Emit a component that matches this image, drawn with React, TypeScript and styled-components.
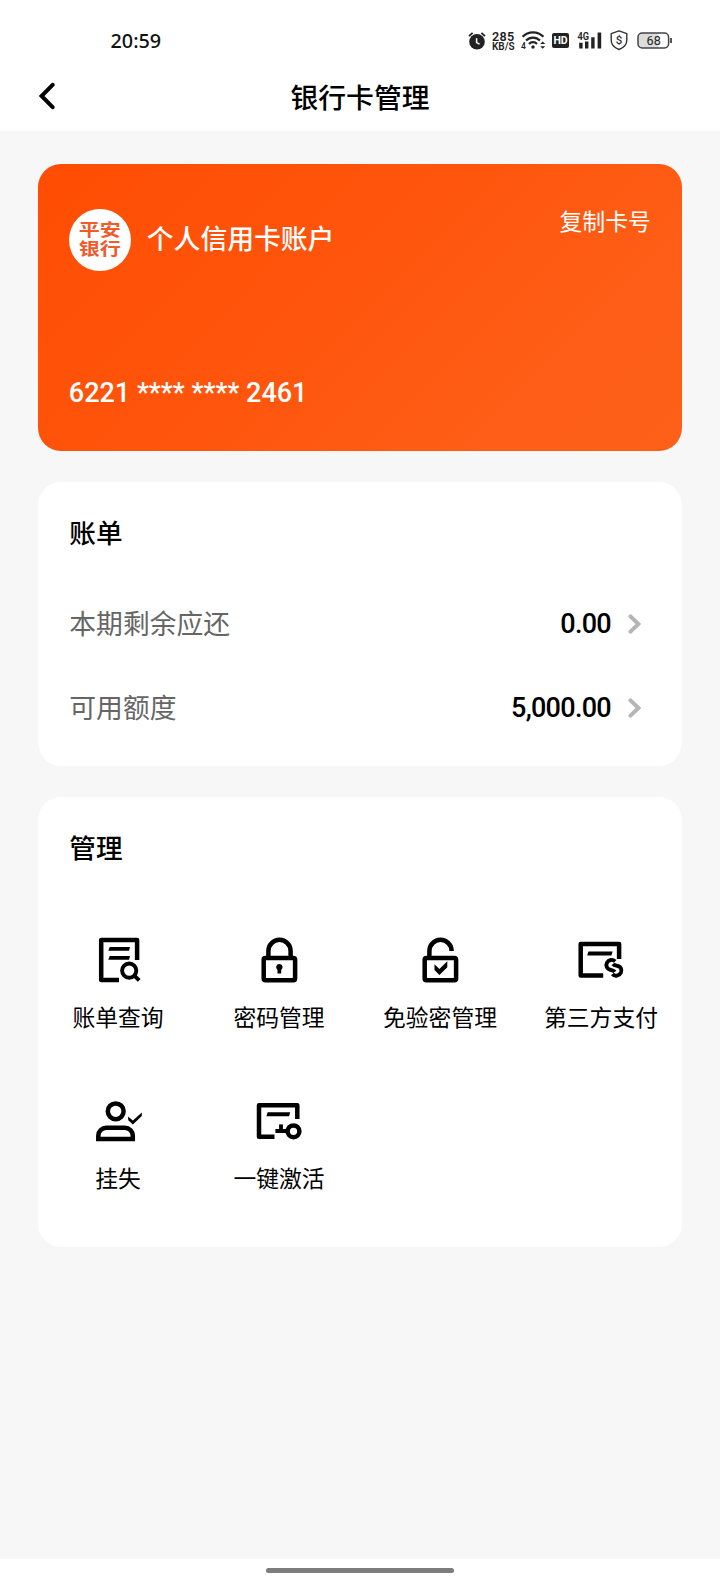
import React from 'react';
import styled, { createGlobalStyle } from 'styled-components';

const sans = `Roboto, "Noto Sans CJK SC", sans-serif`;

const GlobalStyle = createGlobalStyle`
  * { box-sizing: border-box; }
  body { margin: 0; background: #f7f7f7; font-family: ${sans}; color: #0a0a0a; }
`;

const Page = styled.div`
  width: 720px;
  height: 1584px;
  display: flex;
  flex-direction: column;
  background: #f7f7f7;
  overflow: hidden;
`;

const Header = styled.header`
  height: 131px;
  flex: none;
  background: #fff;
`;

const StatusBar = styled.div`
  height: 64px;
  padding: 17px 47px 0 110.5px;
  display: flex;
  justify-content: space-between;
`;

const Clock = styled.div`
  height: 47px;
  font: 500 19.8px/47px "Noto Sans", sans-serif;
  color: #111;
`;

const StatusIcons = styled.div`
  display: flex;
  align-items: center;
  height: 47px;
`;

const StatusIcon = styled.svg<{ $gap?: number }>`
  display: block;
  flex: none;
  margin-left: ${(p) => p.$gap ?? 0}px;
`;

const NetSpeed = styled.div`
  width: 24px;
  margin-left: 6px;
  display: flex;
  flex-direction: column;
  color: #222;
  font-family: Roboto, sans-serif;
  font-weight: 600;
  white-space: nowrap;
`;

const SpeedValue = styled.span`
  font-size: 12.6px;
  line-height: 11px;
  letter-spacing: 0.3px;
`;

const SpeedUnit = styled.span`
  font-size: 10px;
  line-height: 9px;
`;

const NavBar = styled.div`
  height: 67px;
  display: grid;
  grid-template-columns: 100px 1fr 100px;
  align-items: center;
`;

const BackButton = styled.button`
  border: 0;
  padding: 0 0 3px 36.5px;
  background: none;
  display: flex;
`;

const Title = styled.h1`
  margin: 0;
  padding-top: 3px;
  text-align: center;
  font-size: 27.8px;
  line-height: 40px;
  font-weight: 500;
  color: #000;
`;

const Content = styled.main`
  flex: 1;
  padding: 32.5px 38px 0 38.3px;
  display: flex;
  flex-direction: column;
  gap: 31px;
`;

const BankCard = styled.section`
  height: 287.5px;
  border-radius: 23px;
  padding: 45px 31px 0 30.5px;
  color: #fff;
  background: linear-gradient(135deg, #ff4d03 0%, #ff560e 50%, #fe5e17 78%, #fe6018 100%);
`;

const CardTop = styled.div`
  display: flex;
  height: 62px;
`;

const BankLogo = styled.div`
  width: 62px;
  height: 62px;
  border-radius: 50%;
  background: #fff;
  color: #f15a2b;
  display: flex;
  align-items: center;
  justify-content: center;
`;

const LogoLine = styled.span`
  display: block;
  font-size: 21px;
  font-weight: 700;
  line-height: 24px;
`;

const LogoText = styled.div`
  transform: scaleY(0.8);
`;

const AccountName = styled.div`
  margin-left: 16px;
  padding-top: 2px;
  font-size: 26.8px;
  font-weight: 500;
  line-height: 58px;
  flex: 1;
`;

const CopyLink = styled.div`
  padding-top: 1.5px;
  font-size: 22.9px;
  line-height: 26px;
`;

const CardNumber = styled.div`
  margin-top: 106px;
  font-size: 27px;
  font-weight: 500;
  line-height: 32px;
`;

const Panel = styled.section<{ $height: number }>`
  height: ${(p) => p.$height}px;
  border-radius: 23px;
  background: #fff;
`;

const PanelTitle = styled.h2`
  margin: 0;
  padding: 32px 31px 0;
  font-size: 26.6px;
  font-weight: 500;
  line-height: 40px;
  color: #000;
`;

const BillRows = styled.div`
  padding: 27.5px 40px 0 31px;
`;

const BillRow = styled.div`
  height: 84px;
  display: flex;
  align-items: center;
`;

const BillLabel = styled.span`
  flex: 1;
  padding-bottom: 3px;
  font-size: 26.8px;
  color: #666;
`;

const BillValue = styled.span`
  font-size: 27px;
  font-weight: 500;
  letter-spacing: -0.7px;
  color: #000;
  margin-right: 17px;
`;

const ActionGrid = styled.div`
  display: grid;
  grid-template-columns: repeat(4, 161px);
  grid-auto-rows: 161px;
  padding-top: 66.5px;
  margin-left: -0.8px;
`;

const Action = styled.div`
  display: flex;
  flex-direction: column;
  align-items: center;
`;

const ActionLabel = styled.span`
  margin-top: 17px;
  font-size: 22.8px;
  line-height: 36px;
  color: #000;
  white-space: nowrap;
`;

const HomeBar = styled.footer`
  height: 25.5px;
  flex: none;
  background: #fff;
  display: flex;
  justify-content: center;
  padding-top: 9.5px;
`;

const HomeHandle = styled.div`
  width: 188px;
  height: 5px;
  border-radius: 3px;
  background: #7d7d7d;
`;

const ActionIcon = ({ children }: { children: React.ReactNode }) => (
  <svg width="48" height="48" viewBox="0 0 48 48" fill="none" stroke="#000" strokeWidth="4.5" strokeLinejoin="round">
    {children}
  </svg>
);

const BillSearchIcon = () => (
  <ActionIcon>
    <path d="M25 43.9H7.2V3.9H43.1V24" />
    <path d="M15.7 11H36L35 14.8H14.3ZM15.7 20H36L35 23.8H14.3Z" fill="#000" stroke="none" />
    <circle cx="35.2" cy="34.6" r="7.1" strokeWidth="3.9" />
    <path d="M40.3 39.6L45.2 44.4" strokeWidth="4" />
  </ActionIcon>
);

const LockIcon = () => (
  <ActionIcon>
    <rect x="8.7" y="21.9" width="31.4" height="22.3" rx="1.8" />
    <path d="M13.4 21V14.9a11.1 11.1 0 0 1 22.2 0V21" />
    <path d="M24.3 27.9a3.3 3.3 0 0 1 1.9 6V37.5h-3.7V33.9a3.3 3.3 0 0 1 1.8-6Z" fill="#000" stroke="none" />
  </ActionIcon>
);

const UnlockIcon = () => (
  <ActionIcon>
    <rect x="8.7" y="21.9" width="31.4" height="22.3" rx="1.8" />
    <path d="M13.4 21V14.9a11.1 11.1 0 0 1 22.2 0" />
    <path d="M18.5 28.3L23.4 33L31.3 25.2V31.2L23.4 39L18.5 34.1Z" fill="#000" stroke="none" />
  </ActionIcon>
);

const ThirdPartyIcon = () => (
  <ActionIcon>
    <path d="M26.2 39.6H3.7V8.1H42.1V23" />
    <path d="M11.4 15.6H35.6L34.4 19.6H10.2Z" fill="#000" stroke="none" />
    <path d="M38.2 25.4C35.6 23 31.6 23.6 30 26.6C28.4 29.8 30 32.6 32.8 33.6C34.8 34.3 36.6 34.2 37.8 35.8" strokeWidth="3.9" />
    <path d="M35.4 38.2C38 40.8 42.4 39.8 43.9 36.6C45.2 33.6 43.8 31 41.2 30.1C39 29.4 37.4 29.6 36 28" strokeWidth="3.9" />
  </ActionIcon>
);

const ReportLossIcon = () => (
  <ActionIcon>
    <circle cx="21.7" cy="14.3" r="7.9" />
    <path d="M4.3 41.9V38.8a8 8 0 0 1 8-8H30.8a8 8 0 0 1 8 8V41.9Z" strokeLinejoin="miter" />
    <path d="M34 19.4L38.9 23.4L47.8 15.6V18.9L38.9 27.5L34.3 23.3Z" fill="#000" stroke="none" />
  </ActionIcon>
);

const ActivateIcon = () => (
  <ActionIcon>
    <path d="M19.5 39.7H4V8.2H42.3V22" />
    <path d="M12.6 15.2H35.2L34.1 19.3H11.4Z" fill="#000" stroke="none" />
    <circle cx="38.5" cy="34.3" r="5.9" />
    <path d="M20.4 34H32" strokeWidth="4" />
    <path d="M26 27.4V33" strokeWidth="3.8" />
  </ActionIcon>
);

const RowChevron = () => (
  <svg width="14" height="22" viewBox="0 0 14 22" fill="none" stroke="#b5b5b5" strokeWidth="4" strokeLinecap="round" strokeLinejoin="miter">
    <path d="M2.5 3.4L10.4 11L2.5 18.6" />
  </svg>
);

const actions: [string, React.FC][] = [
  ['账单查询', BillSearchIcon],
  ['密码管理', LockIcon],
  ['免验密管理', UnlockIcon],
  ['第三方支付', ThirdPartyIcon],
  ['挂失', ReportLossIcon],
  ['一键激活', ActivateIcon],
];

const bills: [string, string][] = [
  ['本期剩余应还', '0.00'],
  ['可用额度', '5,000.00'],
];

const StatusGlyphs = () => (
  <StatusIcons>
    <StatusIcon width="18" height="20" viewBox="0 0 18 20">
      <circle cx="9" cy="10.8" r="7.8" fill="#222" />
      <path d="M1 5.2L4.6 1.8M17 5.2L13.4 1.8" stroke="#222" strokeWidth="1.8" />
      <path d="M8.6 7.2V11.6L11.6 13.2" stroke="#fff" strokeWidth="1.5" fill="none" />
    </StatusIcon>
    <NetSpeed>
      <SpeedValue>285</SpeedValue>
      <SpeedUnit>KB/S</SpeedUnit>
    </NetSpeed>
    <StatusIcon $gap={5} width="25" height="20" viewBox="0 0 25 20">
      <g fill="none" stroke="#222" strokeWidth="2.2">
        <path d="M1.6 5.8C7.2 -0.2 16.8 -0.2 22.4 5.8" />
        <path d="M5 9.6C9 5.5 15 5.5 19 9.6" />
        <path d="M8 13C10.2 10.6 13.8 10.6 16 13" />
      </g>
      <circle cx="12" cy="16" r="1.7" fill="#222" />
      <text x="0" y="17.6" fontFamily="Roboto" fontWeight="600" fontSize="8.5" fill="#222">4</text>
      <path d="M19.2 13L21.7 10.4L24.2 13ZM19.2 15.2H24.2L21.7 17.8Z" fill="#222" />
    </StatusIcon>
    <StatusIcon $gap={6} width="17" height="15" viewBox="0 0 17 15">
      <rect width="17" height="15" rx="2" fill="#222" />
      <text x="8.5" y="11.4" textAnchor="middle" fontFamily="Roboto" fontWeight="700" fontSize="10.5" fill="#fff">HD</text>
    </StatusIcon>
    <StatusIcon $gap={8} width="26" height="20" viewBox="0 0 26 20">
      <text x="0.4" y="8.6" fontFamily="Roboto" fontWeight="600" fontSize="10.2" textLength="11.6" lengthAdjust="spacingAndGlyphs" fill="#222">4G</text>
      <path d="M2.2 11.8h3.4v5.6H2.2ZM8 10.4h3.4v7H8ZM14.2 6.2h3.4v11.2H14.2ZM20.6 1.6h3.6v15.8h-3.6Z" fill="#222" />
    </StatusIcon>
    <StatusIcon $gap={7} width="18" height="21" viewBox="0 0 18 21">
      <path d="M9 0.9L16.8 3.6V10.3C16.8 14.7 13.6 17.9 9 19.5C4.4 17.9 1.2 14.7 1.2 10.3V3.6Z" fill="none" stroke="#333" strokeWidth="1.4" strokeLinejoin="round" />
      <text x="9" y="14" textAnchor="middle" fontFamily="Roboto" fontWeight="500" fontSize="11.5" fill="#333">$</text>
    </StatusIcon>
    <StatusIcon $gap={9} width="36" height="17" viewBox="0 0 36 17">
      <path d="M5 1H21.5V16H5A4 4 0 0 1 1 12V5A4 4 0 0 1 5 1Z" fill="#dcdcdc" />
      <rect x="1" y="1" width="30.6" height="15" rx="4.2" fill="none" stroke="#444" strokeWidth="1.5" />
      <path d="M34 6V11" stroke="#444" strokeWidth="1.8" />
      <text x="16.7" y="13" textAnchor="middle" fontFamily="Roboto" fontSize="12.6" fill="#222">68</text>
    </StatusIcon>
  </StatusIcons>
);

export default function App() {
  return (
    <Page>
      <GlobalStyle />
      <Header>
        <StatusBar>
          <Clock>20:59</Clock>
          <StatusGlyphs />
        </StatusBar>
        <NavBar>
          <BackButton aria-label="返回">
            <svg width="20" height="28" viewBox="0 0 20 28" fill="none" stroke="#000" strokeWidth="4" strokeLinecap="round">
              <path d="M15.6 2.8L4.6 14L15.6 25.2" />
            </svg>
          </BackButton>
          <Title>银行卡管理</Title>
        </NavBar>
      </Header>
      <Content>
        <BankCard>
          <CardTop>
            <BankLogo>
              <LogoText>
                <LogoLine>平安</LogoLine>
                <LogoLine>银行</LogoLine>
              </LogoText>
            </BankLogo>
            <AccountName>个人信用卡账户</AccountName>
            <CopyLink>复制卡号</CopyLink>
          </CardTop>
          <CardNumber>6221 **** **** 2461</CardNumber>
        </BankCard>
        <Panel $height={284}>
          <PanelTitle>账单</PanelTitle>
          <BillRows>
            {bills.map(([label, value]) => (
              <BillRow key={label}>
                <BillLabel>{label}</BillLabel>
                <BillValue>{value}</BillValue>
                <RowChevron />
              </BillRow>
            ))}
          </BillRows>
        </Panel>
        <Panel $height={450}>
          <PanelTitle>管理</PanelTitle>
          <ActionGrid>
            {actions.map(([label, Icon]) => (
              <Action key={label}>
                <Icon />
                <ActionLabel>{label}</ActionLabel>
              </Action>
            ))}
          </ActionGrid>
        </Panel>
      </Content>
      <HomeBar>
        <HomeHandle />
      </HomeBar>
    </Page>
  );
}
